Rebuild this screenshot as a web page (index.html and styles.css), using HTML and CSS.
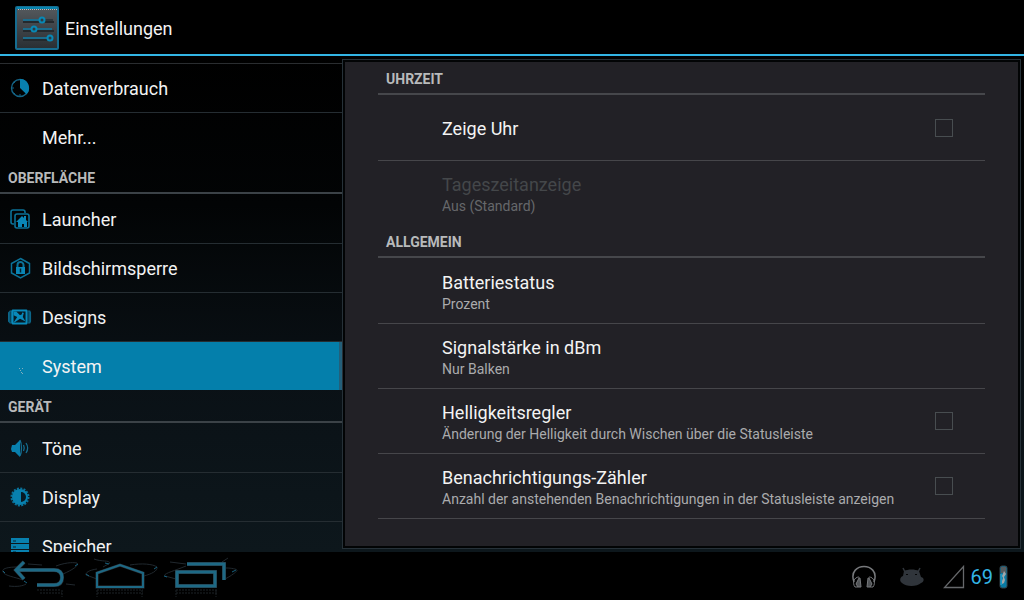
FILE: index.html
```html
<!DOCTYPE html>
<html lang="de">
<head>
    <meta charset="UTF-8">
    <meta name="viewport" content="width=device-width, initial-scale=1.0">
    <title>Einstellungen</title>
    <link rel="stylesheet" href="styles.css">
</head>
<body>
    <header class="action-bar">
        <svg class="app-icon" width="44" height="44" viewBox="0 0 44 44" aria-hidden="true">
            <defs>
                <linearGradient id="tile" x1="0" y1="0" x2="0" y2="1">
                    <stop offset="0" stop-color="#555a5e"/>
                    <stop offset="1" stop-color="#292e33"/>
                </linearGradient>
            </defs>
            <rect x="1" y="1" width="42" height="42" rx="1" fill="url(#tile)" stroke="#166d91" stroke-width="2"/>
            <path d="M2 2h40" stroke="#0783ad" stroke-width="2"/>
            <path d="M3 3.500h39" stroke="#b5bdc1" stroke-dasharray="1 1"/>
            <path d="M8 16h31M8 25h31M8 34h28" stroke="#24292d" stroke-width="2"/>
            <path d="M8 14h16M8 23h8M22 23h15M8 32h24" stroke="#1b6c8c" stroke-width="2"/>
            <path d="M30 14h8" stroke="#30383d" stroke-width="2"/>
            <g fill="#303a41" stroke="#0888b5" stroke-width="2">
                <circle cx="27" cy="14" r="2.500"/>
                <circle cx="19" cy="23" r="2.500"/>
                <circle cx="35" cy="32" r="2.500"/>
            </g>
        </svg>
        <h1>Einstellungen</h1>
    </header>

    <main class="content">
        <nav class="sidebar">
            <a href="#daten" class="item first">
                <svg width="24" height="24" viewBox="0 0 24 24">
                    <circle cx="12" cy="12" r="8.500" fill="none" stroke="#146486" stroke-width="1.400"/>
                    <path d="M12 12V3a9 9 0 0 1 6.500 15.200z" fill="#0880ae"/>
                    <path d="M4 12h2M12 20v-2M6 6l1 1M6 18l1-1" stroke="#146486"/>
                </svg>
                Datenverbrauch
            </a>
            <a href="#mehr" class="item last"><span class="no-icon"></span>Mehr...</a>

            <h2>OBERFLÄCHE</h2>
            <a href="#launcher" class="item">
                <svg width="24" height="24" viewBox="0 0 24 24" fill="none" stroke="#0b7298" stroke-width="1.600">
                    <path d="M6 17H5a2 2 0 0 1-2-2V5a2 2 0 0 1 2-2h10a2 2 0 0 1 2 2v1"/>
                    <rect x="7" y="7" width="14" height="14" rx="2"/>
                    <path d="M8 15l6-6 2 2v-2h2v4l2 2h-1v5h-3v-3h-2v3h-4v-5z" fill="#0a86b6" stroke="none"/>
                </svg>
                Launcher
            </a>
            <a href="#sperre" class="item">
                <svg width="24" height="24" viewBox="0 0 24 24" fill="none" stroke="#0b7298" stroke-width="1.500">
                    <path d="M12.500 2.500l9 5v9.500l-9 5-9-5V7.500z"/>
                    <path d="M9.500 11V9a3 3 0 0 1 6 0v2" stroke-width="2"/>
                    <rect x="8" y="11" width="9" height="7" fill="#0a86b6" stroke="none"/>
                    <path d="M12.500 12.500v4" stroke="#08202b"/>
                </svg>
                Bildschirmsperre
            </a>
            <a href="#designs" class="item">
                <svg width="26" height="24" viewBox="0 0 26 24">
                    <path d="M2 5h3v14H2l-2-2V7zM21 5h3l1 2v10l-1 2h-3z" fill="#0c668a"/>
                    <path d="M2.500 6v12M22.500 6v12" stroke="#07394d"/>
                    <rect x="4" y="4" width="17" height="16" rx="1" fill="#098abb"/>
                    <path d="M6 6h13v12H6z" fill="#061a24"/>
                    <path d="M6 6h3l4 4 4-2-1 4 3 5-6-3-6 4H6l4-6-4-2z" fill="#098abb"/>
                    <circle cx="16" cy="8" r="1" fill="#098abb"/>
                </svg>
                Designs
            </a>
            <a href="#system" class="item last active">
                <svg width="24" height="24" viewBox="0 0 24 24" fill="#83aebd">
                    <path d="M11 14h1v1h-1zM14 14h1v1h-1zM12 16h1v1h-1zM13 18h1v1h-1zM14 19h1v1h-1z"/>
                </svg>
                System
            </a>

            <h2>GERÄT</h2>
            <a href="#toene" class="item">
                <svg width="24" height="24" viewBox="0 0 24 24">
                    <path d="M4 9h3l5-5v17l-5-5H4l-1-3z" fill="#0880ae"/>
                    <path d="M12 4c2 4 2 12 0 16M15.500 9c1 2 1 4 0 6M18 7c2 3 2 7 0 10" fill="none" stroke="#146d90" stroke-width="1.300"/>
                </svg>
                Töne
            </a>
            <a href="#display" class="item">
                <svg width="24" height="24" viewBox="0 0 24 24">
                    <circle cx="12" cy="12" r="8.500" fill="none" stroke="#0a729a" stroke-width="2" stroke-dasharray="2 1.340"/>
                    <circle cx="12" cy="12" r="8" fill="#0880ae"/>
                    <path d="M13 7a5 5 0 0 1 0 10z" fill="#071a24"/>
                </svg>
                Display
            </a>
            <a href="#speicher" class="item">
                <svg width="24" height="24" viewBox="0 0 24 24">
                    <path d="M3 4h18v5H3zM3 10h18v5H3zM3 16h18v4H3z" fill="#0880ae"/>
                    <path d="M5 7h3M5 13h3M5 18h3" stroke="#062634"/>
                </svg>
                Speicher
            </a>
        </nav>

        <section class="panel">
            <div class="panel-inner">
                <h2>UHRZEIT</h2>
                <label class="pref">
                    <span class="text"><span class="title">Zeige Uhr</span></span>
                    <input type="checkbox" name="uhr">
                </label>
                <div class="pref last disabled">
                    <span class="text">
                        <span class="title">Tageszeitanzeige</span>
                        <span class="summary">Aus (Standard)</span>
                    </span>
                </div>

                <h2>ALLGEMEIN</h2>
                <a href="#batterie" class="pref">
                    <span class="text">
                        <span class="title">Batteriestatus</span>
                        <span class="summary">Prozent</span>
                    </span>
                </a>
                <a href="#signal" class="pref">
                    <span class="text">
                        <span class="title">Signalstärke in dBm</span>
                        <span class="summary">Nur Balken</span>
                    </span>
                </a>
                <label class="pref">
                    <span class="text">
                        <span class="title">Helligkeitsregler</span>
                        <span class="summary">Änderung der Helligkeit durch Wischen über die Statusleiste</span>
                    </span>
                    <input type="checkbox" name="helligkeit">
                </label>
                <label class="pref">
                    <span class="text">
                        <span class="title">Benachrichtigungs-Zähler</span>
                        <span class="summary">Anzahl der anstehenden Benachrichtigungen in der Statusleiste anzeigen</span>
                    </span>
                    <input type="checkbox" name="zaehler">
                </label>
            </div>
        </section>
    </main>

    <footer class="system-bar">
        <div class="nav-buttons">
            <button type="button" aria-label="Zurück">
                <svg width="80" height="48" viewBox="0 0 80 48" fill="none">
                    <path d="M17 15C7 15 1 17 3 20c2 4 12 5 20 8M56 14c8-3 16-4 21-3 2 3-5 7-14 11M9 34c8 1 14 0 17-2M28 12l14 1M66 32l9 1" stroke="#20282e"/>
                    <path d="M3 19l2 2M24 29l3 2M75 14l3-2" stroke="#17627f"/>
                    <path d="M37 38h24M40 41h22M62 38v7" stroke="#1c2227" stroke-dasharray="2 1"/>
                    <path d="M24 10l-8 8 8 9M17 18h37q8 0 8 7.500t-8 7.500H37" stroke="#2a3339" stroke-width="4"/>
                    <path d="M24 10l-8 8 8 9M17 18h37q8 0 8 7.500t-8 7.500H37" stroke="#1d6985" stroke-width="3"/>
                </svg>
            </button>
            <button type="button" aria-label="Startseite">
                <svg width="80" height="48" viewBox="0 0 80 48" fill="none">
                    <path d="M17 17C9 18 5 21 6 23l11 4M14 7c8 3 15 1 16 4l-7 4M50 13c12-2 23-1 27 2 1 4-6 7-13 9" stroke="#20282e"/>
                    <path d="M6 22l3 2M25 11l4 1M74 17l3-2" stroke="#17627f"/>
                    <path d="M17 38h46M17 41h46M17 38v7M62 38v7" stroke="#1c2227" stroke-dasharray="2 1"/>
                    <path d="M17 35V21l23-8 23 8v14z" stroke="#2a3339" stroke-width="3"/>
                    <path d="M17 35V21l23-8 23 8v14z" stroke="#1d6985" stroke-width="2"/>
                </svg>
            </button>
            <button type="button" aria-label="Letzte Apps">
                <svg width="80" height="48" viewBox="0 0 80 48" fill="none">
                    <path d="M26 14C14 19 2 22 5 24l11 3M10 10l16 2M66 16c6 0 10 1 11 2s-6 6-12 9M62 10l6-4" stroke="#20282e"/>
                    <path d="M4 24l3 1M72 20l4-2" stroke="#17627f"/>
                    <path d="M16 38h41M16 41h41M16 38v7M56 38v7" stroke="#1c2227" stroke-dasharray="2 1"/>
                    <path d="M27 12h37v16M17 20h38v14H17z" stroke="#2a3339" stroke-width="4"/>
                    <path d="M27 12h37v16M17 20h38v14H17z" stroke="#1d6985" stroke-width="3"/>
                </svg>
            </button>
        </div>
        <div class="status">
            <svg class="headset" width="24" height="24" viewBox="0 0 24 24" fill="none" stroke="#77797c">
                <path d="M2 17C-2 6 6 1.500 12 1.500S26 6 22 17" stroke-width="1.500"/>
                <path d="M7 12c-5 0-7 6-4 10h3M17 12c5 0 7 6 4 10h-3"/>
                <path d="M7 13h1l1 9H6l-2-3zM17 13h-1l-1 9h3l2-3z" fill="#505356"/>
            </svg>
            <svg class="droid" width="24" height="20" viewBox="0 0 24 20">
                <path d="M5 5L3 1M18 5l2-4" stroke="#30353b" stroke-width="1.500"/>
                <path d="M4 4c4-2 11-2 15 0l2 6c4 1 3 5 0 6-4 4-15 4-19 0-3-2-2-6 1-7z" fill="#30353b"/>
                <path d="M6 7h2v1H6zM15 7h2v1h-2z" fill="#050607"/>
            </svg>
            <svg class="signal" width="22" height="24" viewBox="0 0 22 24" fill="none">
                <path d="M1.500 22.500h19V1.500z" stroke="#66686b" stroke-width="1.300"/>
            </svg>
            <span class="battery-level">69</span>
            <svg width="9" height="24" viewBox="0 0 9 24">
                <rect x="1" y="1" width="7" height="22" rx="2" fill="#087aa3" stroke="#34434b"/>
                <path d="M2 2h5v6H2z" fill="#555b5f"/>
                <path d="M5 6l2 3-2 3 1 3-1 3-2 1v-3l1-3-1-2z" fill="#a1a7aa"/>
                <path d="M2 9v11" stroke="#2db4e5"/>
            </svg>
        </div>
    </footer>
</body>
</html>
```

FILE: styles.css
```css
* {
    box-sizing: border-box;
}

body {
    margin: 0;
    height: 100vh;
    display: flex;
    flex-direction: column;
    overflow: hidden;
    background-color: #000;
    color: #f3f3f3;
    font-family: Roboto, "Noto Sans", sans-serif;
    font-size: 18px;
}

a {
    color: inherit;
    text-decoration: none;
}

h1,
h2 {
    margin: 0;
}

/* Top bar */
.action-bar {
    flex: none;
    display: flex;
    align-items: center;
    gap: 6px;
    height: 56px;
    padding: 1px 0 0 15px;
    border-bottom: 2px solid #33b5e5;
}

.action-bar h1 {
    padding-top: 1px;
    font-size: 18px;
    font-weight: 400;
}

.content {
    flex: 1;
    min-height: 0;
    display: flex;
    background: linear-gradient(#000, #020405 30%, #0a1116 65%, #0d171c);
}

h2 {
    display: flex;
    align-items: center;
    height: 33px;
    padding: 3px 0 0 8px;
    border-bottom: 2px solid #46474b;
    color: #b8babb;
    font-size: 14px;
    font-weight: 700;
}

.panel h2,
.sidebar h2 {
    margin-bottom: 1px;
}

.sidebar h2 {
    border-color: #3b4247;
}

/* Left list */
.sidebar {
    flex: 0 0 33.4%;
    padding-top: 7px;
    overflow: hidden;
}

.item {
    display: flex;
    align-items: center;
    gap: 10px;
    height: 49px;
    padding-left: 8px;
    border-bottom: 1px solid #252d32;
}

.item svg,
.no-icon {
    flex: none;
    width: 24px;
}

.item.first {
    height: 50px;
    border-top: 1px solid #2a2d30;
}

.item.last {
    height: 48px;
    border-bottom: none;
}

.item.active {
    background-color: #047fab;
    border-right: 3px solid #245f79;
}

/* Right side */
.panel {
    flex: 1;
    margin: 3px 3px 3px 0;
    padding: 2px;
    border: 1px solid #263138;
    background-color: #020405;
}

.panel-inner {
    height: 100%;
    padding: 0 33px;
    background-color: #222126;
}

.pref {
    display: flex;
    align-items: center;
    justify-content: space-between;
    height: 65px;
    padding: 0 32px 0 64px;
    border-bottom: 1px solid #46464a;
}

.pref.last {
    height: 64px;
    border-bottom: none;
}

.text {
    display: flex;
    flex-direction: column;
    padding-top: 2px;
}

.title {
    line-height: 24px;
}

.summary {
    color: #aaabad;
    font-size: 14px;
    line-height: 18px;
}

.disabled .title {
    color: #44474a;
}

.disabled .summary {
    color: #66686b;
}

.pref input {
    appearance: none;
    flex: none;
    width: 18px;
    height: 18px;
    margin: 0;
    border: 1px solid #484d50;
    background-color: #222126;
}

.pref input:checked {
    background-color: #33b5e5;
}

/* Bottom bar */
.system-bar {
    flex: none;
    display: flex;
    align-items: center;
    justify-content: space-between;
    height: 48px;
    padding-right: 16px;
    background-color: #000;
}

.nav-buttons {
    display: flex;
}

.nav-buttons button {
    display: flex;
    width: 80px;
    height: 48px;
    padding: 0;
    border: none;
    background: none;
    cursor: pointer;
}

.status {
    display: flex;
    align-items: center;
    padding-top: 2px;
}

.headset {
    margin-right: 24px;
}

.droid {
    margin-right: 19px;
}

.signal {
    margin-right: 6px;
}

.battery-level {
    margin-right: 6px;
    color: #33b5e5;
    font-size: 20px;
}
```
